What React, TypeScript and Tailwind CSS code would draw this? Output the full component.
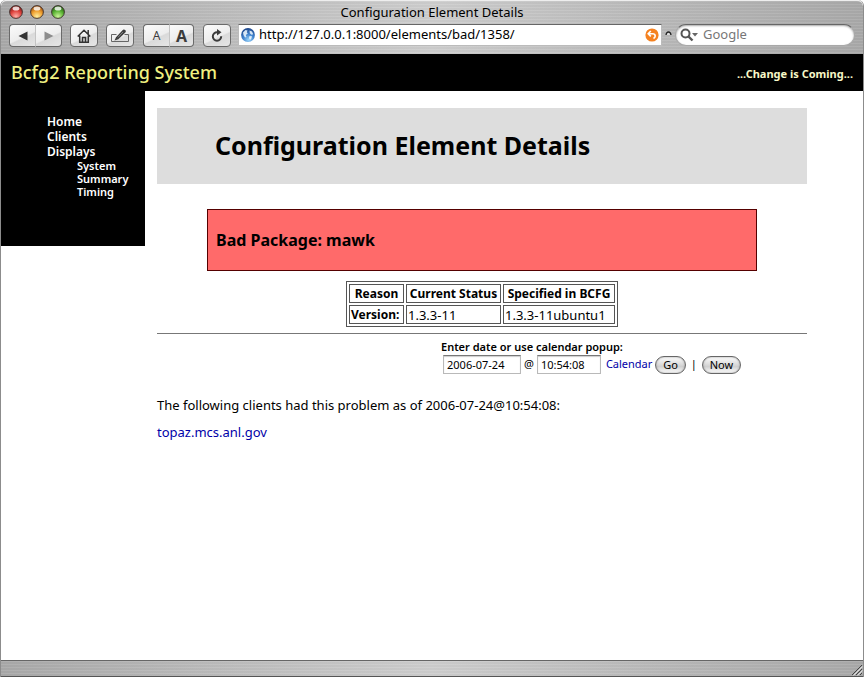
import React from "react";

const metal =
  "bg-[repeating-linear-gradient(180deg,rgba(255,255,255,0.07)_0px,rgba(255,255,255,0.07)_1px,rgba(0,0,0,0.02)_1px,rgba(0,0,0,0.02)_3px),linear-gradient(90deg,#a9a9a9_0%,#bcbcbc_25%,#cecece_50%,#bababa_75%,#a9a9a9_100%)]";
const toolButton =
  "flex h-[23px] items-center justify-center rounded-[4px] border border-[#6a6a6a] bg-linear-[155deg,#fbfbfb_0%,#ededed_55%,#dadada_60%,#e6e6e6_100%] text-[#3c3c3c]";
const pill =
  "h-[18px] rounded-full border border-[#666] bg-linear-[180deg,#fdfdfd_0%,#dcdcdc_45%,#d0d0d0_60%,#ffffff_100%] text-[11px] leading-[15px] shadow-[inset_0_0_2px_#888]";
const field =
  "h-[19px] border border-[#b9b9b9] border-t-[#777] bg-white px-[3px] text-[11px] shadow-[inset_0_1px_1px_#ccc]";

function Light({ id, dark, mid, light }: { id: string; dark: string; mid: string; light: string }) {
  return (
    <button type="button" aria-label={id} className="size-[14px]">
      <svg viewBox="0 0 14 14" className="block size-[14px]">
        <defs>
          <radialGradient id={id} cx="50%" cy="85%" r="80%">
            <stop offset="0%" stopColor={light} />
            <stop offset="55%" stopColor={mid} />
            <stop offset="100%" stopColor={dark} />
          </radialGradient>
        </defs>
        <circle cx="7" cy="7" r="6.4" fill={`url(#${id})`} stroke="#3c2f2c" strokeWidth="0.9" />
        <ellipse cx="7" cy="3.4" rx="3.4" ry="2" fill="#fff" opacity="0.8" />
      </svg>
    </button>
  );
}

function Toolbar() {
  return (
    <div className="flex h-[32px] items-start px-2 pt-px">
      <div className="flex w-[53px]">
        <button type="button" aria-label="Back" className={`${toolButton} w-[27px] rounded-r-none border-r-[#c4c4c4]`}>
          <svg viewBox="0 0 10 10" className="h-[10px] w-[10px]"><path d="M9.5 .5v9L.5 5z" fill="#333" /></svg>
        </button>
        <button type="button" aria-label="Forward" className={`${toolButton} w-[26px] rounded-l-none border-l-0`}>
          <svg viewBox="0 0 10 10" className="h-[10px] w-[10px]"><path d="M.5 .5v9l9-4.500z" fill="#8d8d8d" /></svg>
        </button>
      </div>
      <button type="button" aria-label="Home" className={`${toolButton} ml-2 w-7`}>
        <svg viewBox="0 0 14 14" className="size-[14px]" fill="none" stroke="#333" strokeWidth="1.5">
          <path d="M.7 7.500 7 1.200l6.300 6.300M2.700 6.500v6.700h8.600V6.500M5.500 13V8.500h3V13M11.200 1v4" />
        </svg>
      </button>
      <button type="button" aria-label="AutoFill" className={`${toolButton} ml-2 w-7`}>
        <svg viewBox="0 0 20 14" className="h-[14px] w-5 shrink-0">
          <path d="M6.500 5.500h-5v7h17v-7h-4" fill="none" stroke="#666" />
          <path d="M4.500 11.500 6 8.300 13 .8q1-.8 2.200.3t.4 2.200L8.300 10.300z" fill="#3c3c3c" />
          <path d="m8 8.300 5-5.300" stroke="#999" strokeWidth=".8" />
        </svg>
      </button>
      <div className="ml-[9px] flex w-[51px]">
        <button type="button" aria-label="Smaller text" className={`${toolButton} w-[27px] rounded-r-none border-r-[#c4c4c4] text-[12px]`}>A</button>
        <button type="button" aria-label="Larger text" className={`${toolButton} w-6 rounded-l-none border-l-0 text-[16px] font-bold`}>A</button>
      </div>
      <button type="button" aria-label="Reload" className={`${toolButton} ml-[9px] w-7`}>
        <svg viewBox="0 0 12 13" className="h-[13px] w-3">
          <path d="M10.200 7.200A4.200 4.200 0 1 1 6.500 3.300" fill="none" stroke="#3c3c3c" strokeWidth="2" />
          <path d="M6 0v6.500L10.500 3.300z" fill="#3c3c3c" />
        </svg>
      </button>
      <div className="ml-[7px] flex h-[22px] min-w-0 flex-1 items-center border border-[#bbb] border-t-[#666] bg-white px-[2px]">
        <svg viewBox="0 0 14 14" className="size-[14px] shrink-0">
          <defs>
            <radialGradient id="globe" cx="55%" cy="85%" r="85%">
              <stop offset="0%" stopColor="#9ad4fa" />
              <stop offset="50%" stopColor="#3d80cc" />
              <stop offset="100%" stopColor="#1c4488" />
            </radialGradient>
          </defs>
          <circle cx="7" cy="7" r="6.900" fill="url(#globe)" />
          <path d="M2 4.500 4.500 2 6.500 2.500 5.800 4.300 6.800 5.500 4.800 7 5.500 9 4 9.500 2.500 7zM8.500 2.500l2.500 1 1.200 2.700-1.700.6L8.800 5.200zM8.500 8l2.500.3-.6 2.200L9 12l-1-2z" fill="#f2faff" opacity=".85" />
        </svg>
        <input aria-label="Address" defaultValue="http://127.0.0.1:8000/elements/bad/1358/" className="ml-1 min-w-0 flex-1 text-[13px] outline-none" />
        <button type="button" aria-label="SnapBack">
          <svg viewBox="0 0 14 14" className="size-[14px]">
            <circle cx="7" cy="7" r="6.600" fill="#f58220" />
            <path d="M5.800 3 3.200 5.700l2.600 2.700M3.500 5.700h4q2.700 0 2.700 2.200 0 1.600-1.700 2.600" fill="none" stroke="#fff" strokeWidth="1.600" />
          </svg>
        </button>
      </div>
      <svg viewBox="0 0 7 6" className="mx-[3px] mt-[7px] h-[6px] w-[7px]"><path d="M1 4Q1.500 1 3.500 1T6 4z" fill="#ddd" /><path d="M1 4Q1.500 1 3.500 1T6 4" fill="none" stroke="#222" strokeWidth="1.300" /></svg>
      <div className="flex h-[22px] w-[180px] items-center rounded-full border border-[#a8a8a8] border-t-[#666] bg-white pl-1 shadow-[inset_0_1px_2px_#aaa]">
        <svg viewBox="0 0 18 14" className="h-[14px] w-[18px]">
          <circle cx="5.500" cy="5.500" r="4" fill="none" stroke="#555" strokeWidth="2" />
          <path d="m8.500 8.500 4 4" stroke="#555" strokeWidth="2.400" />
          <path d="M12 5h6l-3 3.500z" fill="#666" />
        </svg>
        <input aria-label="Search" placeholder="Google" className="ml-[5px] w-32 text-[13px] outline-none placeholder:text-[#777]" />
      </div>
    </div>
  );
}

export default function App() {
  return (
    <div className="flex min-h-screen flex-col overflow-hidden rounded-t-[6px] border-x border-x-[#8c8c8c] bg-white font-['Noto_Sans','Lucida_Grande',sans-serif] text-[13px] text-black">
      <header className={`h-[54px] rounded-t-[6px] border-t border-t-[#eee] ${metal}`}>
        <div className="grid h-[22px] grid-cols-[1fr_auto_1fr] items-center">
          <div className="flex gap-[7px] pl-2">
            <Light id="Close" dark="#7b1a17" mid="#e0443f" light="#ffb0a8" />
            <Light id="Minimize" dark="#9a4d0c" mid="#f0a030" light="#fff0a0" />
            <Light id="Zoom" dark="#235c12" mid="#5cb535" light="#ccf59a" />
          </div>
          <div className="text-[13px] leading-5">Configuration Element Details</div>
        </div>
        <Toolbar />
      </header>

      <div className="flex h-[37px] items-center justify-between bg-black pr-[10px] pl-[10px]">
        <div className="text-[18px] font-medium text-[#f0f080]">Bcfg2 Reporting System</div>
        <div className="pt-[3px] text-[11px] font-bold text-[#f8f8c8]">...Change is Coming...</div>
      </div>

      <div className="flex flex-1 items-start">
        <nav className="h-[155px] w-36 shrink-0 bg-black pt-[23px] pl-[46px] text-[12px] leading-[15px] font-semibold text-white">
          <ul>
            <li><a href="#home">Home</a></li>
            <li><a href="#clients">Clients</a></li>
            <li>
              <a href="#displays">Displays</a>
              <ul className="pl-[30px] text-[11px] leading-[13px]">
                <li><a href="#system">System</a></li>
                <li><a href="#summary">Summary</a></li>
                <li><a href="#timing">Timing</a></li>
              </ul>
            </li>
          </ul>
        </nav>

        <main className="min-w-0 flex-1 pt-[17px] pr-14 pl-3">
          <div className="bg-[#ddd] px-[58px] pt-[19px] pb-[21px]">
            <h1 className="text-[25px] leading-9 font-bold">Configuration Element Details</h1>
          </div>
          <div className="mx-[50px] mt-[25px] border border-[#500] bg-[#ff6a6a] px-2 py-5">
            <h2 className="text-[16px] leading-5 font-bold">Bad Package: mawk</h2>
          </div>
          <table className="mx-auto mt-[10px] border-separate border-spacing-[2px] border border-[#555] text-left text-[12px] leading-4 [&_td]:border [&_td]:border-[#555] [&_td]:px-px [&_td]:pt-px [&_td]:text-[13px] [&_th]:border [&_th]:border-[#555] [&_th]:px-px [&_th]:pt-px">
            <thead>
              <tr>
                <th className="w-[55px] text-center">Reason</th>
                <th className="w-[95px] text-center">Current Status</th>
                <th className="w-[112px] text-center">Specified in BCFG</th>
              </tr>
            </thead>
            <tbody>
              <tr>
                <th>Version:</th>
                <td>1.3.3-11</td>
                <td>1.3.3-11ubuntu1</td>
              </tr>
            </tbody>
          </table>
          <hr className="mt-[6px] border-[#777]" />
          <form className="mt-[5px] mr-[66px] ml-auto w-[300px] text-[11px]" onSubmit={(e) => e.preventDefault()}>
            <label htmlFor="date" className="block leading-4 font-semibold">Enter date or use calendar popup:</label>
            <div className="flex items-center pl-[2px]">
              <input id="date" defaultValue="2006-07-24" className={`${field} w-[78px]`} />
              <span className="mx-[3px]">@</span>
              <input aria-label="Time" defaultValue="10:54:08" className={`${field} w-16`} />
              <a href="#calendar" className="ml-[5px] text-[#0000a8]">Calendar</a>
              <button type="submit" className={`${pill} ml-[3px] w-[31px]`}>Go</button>
              <span className="mx-[5px]">|</span>
              <button type="button" className={`${pill} w-10`}>Now</button>
            </div>
          </form>
          <p className="mt-[22px] text-[13px] leading-[18px]">The following clients had this problem as of 2006-07-24@10:54:08:</p>
          <p className="mt-[9px] text-[13px] leading-[18px]"><a href="#topaz" className="text-[#0000a8]">topaz.mcs.anl.gov</a></p>
        </main>
      </div>

      <footer className={`flex h-[17px] items-end justify-end border-t border-b border-t-[#666] border-b-[#555] ${metal}`}>
        <svg viewBox="0 0 12 12" className="size-3"><path d="M1 11 11 1M5 11l6-6M9 11l2-2" stroke="#444" /><path d="M2.500 11.500 11.500 2.500M6.500 11.500l5-5" stroke="#eee" strokeWidth=".8" /></svg>
      </footer>
    </div>
  );
}
